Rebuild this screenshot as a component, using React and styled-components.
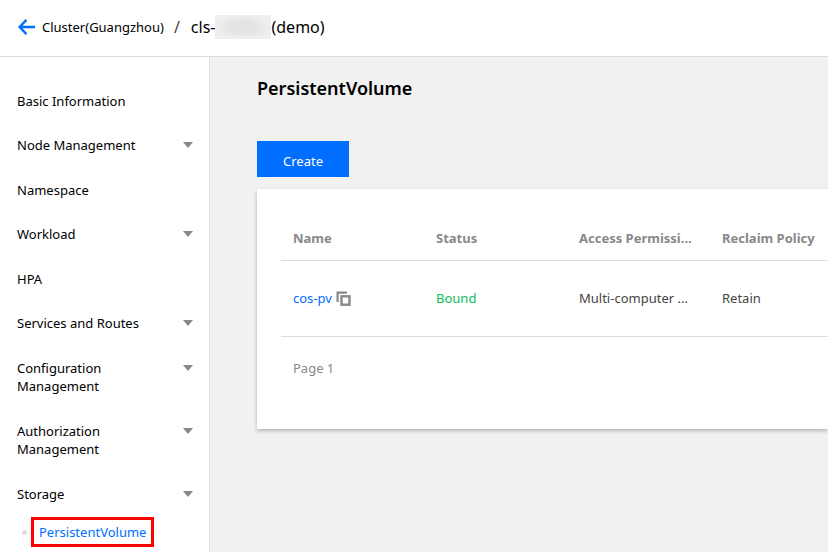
import React from "react";
import styled, { createGlobalStyle } from "styled-components";

const menu = [
  { label: "Basic Information" },
  { label: "Node Management", expandable: true },
  { label: "Namespace" },
  { label: "Workload", expandable: true },
  { label: "HPA" },
  { label: "Services and Routes", expandable: true },
  { label: "Configuration Management", expandable: true },
  { label: "Authorization Management", expandable: true },
  { label: "Storage", expandable: true, children: ["PersistentVolume"] },
];

const volumes = [
  {
    name: "cos-pv",
    status: "Bound",
    access: "Multi-computer ...",
    policy: "Retain",
  },
];

function ArrowLeft() {
  return (
    <svg width="17" height="17" viewBox="0 0 17 17" fill="none" aria-hidden="true">
      <path d="M8.5 0.8L1.6 8L8.5 15.2M1.6 8H17" stroke="#006eff" strokeWidth="2.4" />
    </svg>
  );
}

function CopyIcon() {
  return (
    <svg width="15" height="15" viewBox="0 0 15 15" fill="none" aria-hidden="true">
      <path d="M1.6 11V1.6H11" stroke="#888" strokeWidth="2.2" />
      <rect x="5.5" y="5.3" width="8" height="8.4" stroke="#888" strokeWidth="2.4" />
    </svg>
  );
}

export default function App() {
  return (
    <>
      <GlobalStyle />
      <Page>
        <Header>
          <BackLink href="#clusters">
            <ArrowLeft />
            Cluster(Guangzhou)
          </BackLink>
          <Slash>/</Slash>
          <ClusterId>
            cls-
            <Redacted />
            (demo)
          </ClusterId>
        </Header>

        <Body>
          <Sidebar>
            {menu.map((item) => (
              <React.Fragment key={item.label}>
                <MenuItem type="button" $expandable={item.expandable}>
                  <MenuLabel>{item.label}</MenuLabel>
                  {item.expandable && <Caret />}
                </MenuItem>
                {item.children?.map((child) => (
                  <SubItem key={child}>
                    <Dot />
                    <SubLink href="#pv">{child}</SubLink>
                  </SubItem>
                ))}
              </React.Fragment>
            ))}
          </Sidebar>

          <Main>
            <Title>PersistentVolume</Title>
            <CreateButton type="button">Create</CreateButton>
            <Card>
              <Table>
                <thead>
                  <tr>
                    <Th $width={143}>Name</Th>
                    <Th $width={143}>Status</Th>
                    <Th $width={143}>Access Permissi...</Th>
                    <Th>Reclaim Policy</Th>
                  </tr>
                </thead>
                <tbody>
                  {volumes.map((pv) => (
                    <tr key={pv.name}>
                      <Td>
                        <NameCell>
                          <NameLink href="#cos-pv">{pv.name}</NameLink>
                          <CopyButton type="button" aria-label="Copy">
                            <CopyIcon />
                          </CopyButton>
                        </NameCell>
                      </Td>
                      <Td $color="#0abf5b">{pv.status}</Td>
                      <Td>{pv.access}</Td>
                      <Td>{pv.policy}</Td>
                    </tr>
                  ))}
                </tbody>
              </Table>
              <Pager>Page 1</Pager>
            </Card>
          </Main>
        </Body>
      </Page>
    </>
  );
}

const GlobalStyle = createGlobalStyle`
  * { box-sizing: border-box; }

  body {
    margin: 0;
    background: #f1f1f1;
    color: #000;
    font-family: "Noto Sans", "Open Sans", sans-serif;
    font-size: 13px;
    line-height: 18px;
  }

  button {
    font: inherit;
    border: none;
    cursor: pointer;
  }

  a { text-decoration: none; }
`;

const Page = styled.div`
  display: flex;
  flex-direction: column;
  min-height: 100vh;
`;

const Header = styled.header`
  display: flex;
  flex: none;
  align-items: center;
  height: 57px;
  padding: 0 18px 2px;
  background: #fff;
  border-bottom: 1px solid #ddd;
`;

const BackLink = styled.a`
  display: flex;
  align-items: center;
  gap: 7px;
  color: #000;
`;

const Slash = styled.span`
  margin: 0 11px 0 10px;
  font-size: 16px;
  color: #444;
`;

const ClusterId = styled.span`
  display: flex;
  align-items: center;
  font-size: 16px;
`;

const Redacted = styled.span`
  width: 56px;
  height: 24px;
  background: radial-gradient(ellipse, #e3e3e3 30%, #efefef 70%);
`;

const Body = styled.div`
  display: flex;
  flex: 1;
`;

const Sidebar = styled.nav`
  flex: none;
  width: 210px;
  padding-top: 22px;
  background: #fff;
  border-right: 1px solid #ddd;
`;

const MenuItem = styled.button`
  display: flex;
  align-items: flex-start;
  justify-content: space-between;
  width: 100%;
  padding: 13px 16px ${(p) => (p.$expandable ? 14 : 13)}px 17px;
  background: transparent;
  color: #000;
  text-align: left;
`;

const MenuLabel = styled.span`
  max-width: 140px;
`;

const Caret = styled.span`
  margin-top: 6px;
  border: 5px solid transparent;
  border-top: 6px solid #888;
  border-bottom: none;
`;

const SubItem = styled.div`
  display: flex;
  align-items: center;
  gap: 4px;
  padding-left: 22px;
`;

const Dot = styled.span`
  width: 5px;
  height: 5px;
  border-radius: 50%;
  background: #ddd;
`;

const SubLink = styled.a`
  padding: 3px 5px;
  border: 3px solid #f00;
  color: #006eff;
`;

const Main = styled.main`
  flex: 1;
  min-width: 0;
  padding: 19px 0 0 47px;
`;

const Title = styled.h1`
  margin: 0 0 41px;
  font-size: 18px;
  line-height: 24px;
  font-weight: 600;
`;

const CreateButton = styled.button`
  display: block;
  height: 36px;
  margin-bottom: 12px;
  padding: 4px 26px 0;
  background: #006eff;
  color: #fff;
`;

const Card = styled.section`
  padding: 27px 0 30px 24px;
  background: #fff;
  box-shadow: 0 2px 4px rgba(0, 0, 0, 0.25);
`;

const Table = styled.table`
  width: 100%;
  table-layout: fixed;
  border-collapse: collapse;
`;

const Th = styled.th`
  width: ${(p) => (p.$width ? `${p.$width}px` : "auto")};
  height: 44px;
  padding: 0 12px;
  border-bottom: 1px solid #ddd;
  color: #888;
  font-weight: 700;
  text-align: left;
  overflow: hidden;
  text-overflow: ellipsis;
  white-space: nowrap;

  &:last-child {
    padding-right: 0;
  }
`;

const Td = styled.td`
  height: 76px;
  padding: 0 12px;
  border-bottom: 1px solid #ddd;
  color: ${(p) => p.$color || "#444"};
  overflow: hidden;
  text-overflow: ellipsis;
  white-space: nowrap;
`;

const NameCell = styled.div`
  display: flex;
  align-items: center;
  gap: 4px;
`;

const NameLink = styled.a`
  color: #006eff;
`;

const CopyButton = styled.button`
  display: flex;
  padding: 0;
  background: transparent;
`;

const Pager = styled.div`
  padding: 22px 12px;
  color: #888;
`;
